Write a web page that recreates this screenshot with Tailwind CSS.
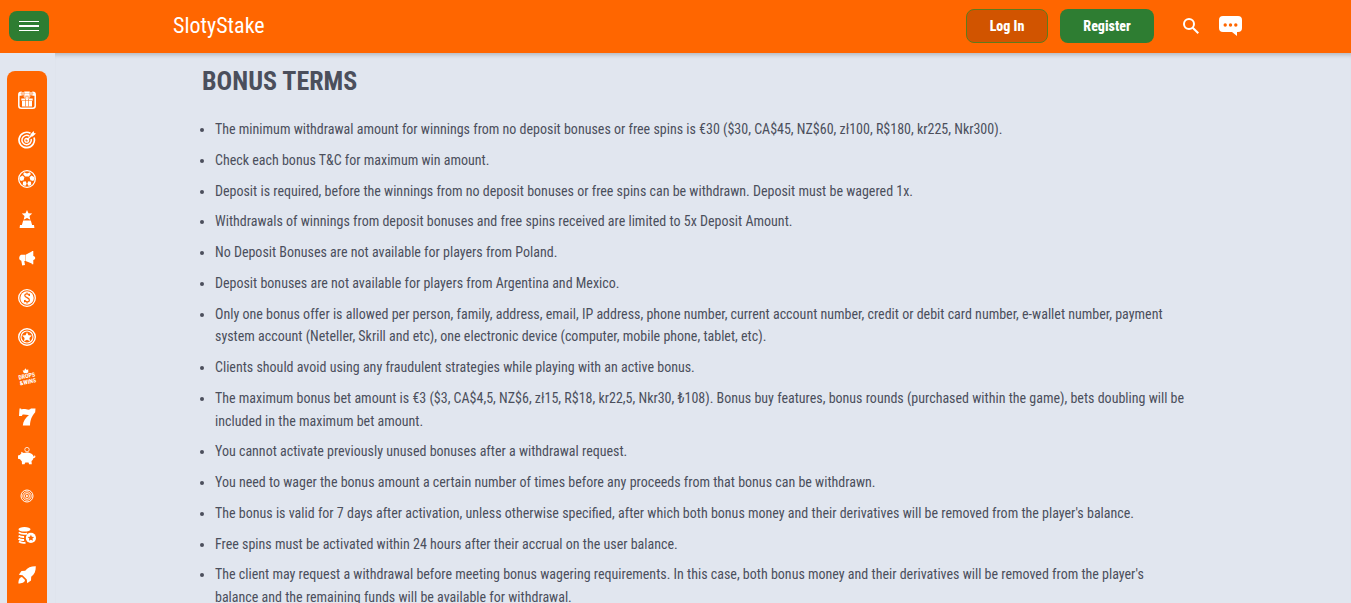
<!DOCTYPE html>
<html lang="en">
<head>
  <meta charset="UTF-8" />
  <meta name="viewport" content="width=device-width, initial-scale=1.0" />
  <title>SlotyStake - Bonus Terms</title>
  <script src="https://cdn.jsdelivr.net/npm/@tailwindcss/browser@4"></script>
</head>
<body class="h-screen overflow-hidden flex flex-col bg-[#e1e6ef] text-[#4b4f5c] font-['Roboto_Condensed','Liberation_Sans_Narrow','Roboto',sans-serif]">

  <!-- Header -->
  <header class="shrink-0 h-[53px] bg-[#ff6600] flex items-center pl-[9px] pr-[108px] pb-0.5">
    <button type="button" aria-label="Open menu" class="w-10 h-[30px] rounded-lg bg-[#2e7d32] flex flex-col items-center justify-center gap-[3px]">
      <span class="w-5 h-px bg-white"></span>
      <span class="w-5 h-0.5 bg-white"></span>
      <span class="w-5 h-px bg-white"></span>
    </button>
    <a href="#" class="ml-[124px] text-[22px] leading-8 text-white">SlotyStake</a>
    <div class="ml-auto flex items-center">
      <button type="button" class="w-[82px] h-[34px] rounded-lg border border-[#5f7a1c] bg-[#d15400] text-white text-sm font-extrabold">Log In</button>
      <button type="button" class="ml-3 w-[94px] h-[34px] rounded-lg bg-[#2e7d32] text-white text-sm font-extrabold">Register</button>
      <button type="button" aria-label="Search" class="ml-7 text-white">
        <svg class="w-[18px] h-[18px]" viewBox="0 0 18 18" fill="none" stroke="currentColor" stroke-width="2"><circle cx="7" cy="7" r="5"/><path d="M10.7 10.700l5.600 5.600"/></svg>
      </button>
      <button type="button" aria-label="Chat" class="ml-[19px] text-white">
        <svg class="w-6 h-5" viewBox="0 0 24 20" fill="currentColor"><path fill-rule="evenodd" d="M4 0h15a4 4 0 0 1 4 4v8a4 4 0 0 1-4 4h-1v4l-5-4H4a4 4 0 0 1-4-4V4a4 4 0 0 1 4-4zM6.200 7.300a1.700 1.700 0 1 0 0 3.400 1.700 1.700 0 0 0 0-3.400zm5.300 0a1.700 1.700 0 1 0 0 3.400 1.700 1.700 0 0 0 0-3.400zm5.300 0a1.700 1.700 0 1 0 0 3.400 1.700 1.700 0 0 0 0-3.400z"/></svg>
      </button>
    </div>
  </header>

  <div class="flex-1 min-h-0 flex">
    <!-- Sidebar -->
    <aside class="shrink-0 w-[55px] pl-[7px] pt-[18px] flex">
      <nav class="w-10 rounded-t-lg bg-[#ff6600] text-white pt-5 pb-[19px] flex flex-col items-center justify-between">
        <a href="#" aria-label="Promotions"><svg class="w-[18px] h-[18px]" viewBox="0 0 18 18" fill="none" stroke="currentColor"><rect x=".8" y="1.300" width="16.400" height="15.900" rx="2.500" stroke-width="1.500"/><path d="M1 3.500h16" stroke-width="2.500"/><path d="M5 0v5M13 0v5" stroke="#ff6600" stroke-width="2.600"/><path d="M5 1v3.500M13 1v3.500" stroke-width="1.200"/><rect x="4" y="10" width="10" height="5.500" fill="currentColor" stroke="none"/><rect x="3.300" y="7.500" width="11.400" height="2" fill="currentColor" stroke="none"/><path d="M7.500 7.500v8M10.500 7.500v8" stroke="#ff6600" stroke-width=".6"/><path d="M9 7.300C6 7 5.500 4.800 7 4.800S9 7.300 9 7.300s.5-2.500 2-2.500S12 7 9 7.300z"/></svg></a>
        <a href="#" aria-label="Challenges"><svg class="w-[18px] h-[18px]" viewBox="0 0 18 18" fill="none" stroke="currentColor"><path d="M12.500 2.300A7.700 7.700 0 1 0 16 6.500" stroke-width="1.700"/><path d="M11.300 5.200A4.700 4.700 0 1 0 13.200 8" stroke-width="1.500"/><circle cx="8.700" cy="9.300" r="1.900" stroke-width="1.300"/><path d="M8.700 9.300l5.800-5.800" stroke-width="1.400"/><path d="M12.600 3.300L15.600 0l.5 1.900 1.900.5-3.300 3.100-2.100-.2z" fill="currentColor" stroke="none"/></svg></a>
        <a href="#" aria-label="Sport"><svg class="w-[18px] h-[18px]" viewBox="0 0 18 18" fill="none" stroke="currentColor"><circle cx="9" cy="9" r="8.300" stroke-width="1.300"/><g fill="currentColor" stroke="none"><path d="M6 2.200l3 1.400 3-1.400.8 2-2 2.200H7.200l-2-2.200zM2 7l2.500-1.500 1.900 1.800-.8 3-2.800.7L1.500 9zM16 7l-2.500-1.500-1.900 1.800.8 3 2.800.7 1.300-2zM5 11.800l2.700-.6 1 2.500-1.400 2.400-2.500-1.200zM13 11.800l-2.700-.6-1 2.500 1.400 2.400 2.500-1.200z"/></g></svg></a>
        <a href="#" aria-label="Tournaments"><svg class="w-[18px] h-[18px]" viewBox="0 0 18 18" fill="currentColor"><path d="M9 0l1.500 3.200 3.700.4-2.700 2.500.8 3.700L9 8 5.700 9.800l.8-3.700-2.700-2.500 3.700-.4zM5.200 10.600h7.600l1.300 4.400H3.900zM2 15h14l.4 3H1.600z"/></svg></a>
        <a href="#" aria-label="News"><svg class="w-[18px] h-[18px]" viewBox="0 0 18 18" fill="currentColor"><path d="M13.800 2h1.500v4.900c1.200.2 1.900 1 1.900 2s-.7 1.800-1.900 2v4.300h-1.500zM7.600 5.800l6.200-3.300v12L7.600 12zM3.800 5.800h3.400v6.200h-.9l.7 4-2.800.4-.9-4.600C1.900 11.300 1.200 10.300 1.200 9s1-3.200 2.600-3.200z"/></svg></a>
        <a href="#" aria-label="Cashback"><svg class="w-[18px] h-[18px]" viewBox="0 0 18 18" fill="none" stroke="currentColor"><circle cx="9" cy="9" r="8.300" stroke-width="1.300"/><circle cx="9" cy="9" r="6.700" fill="currentColor" stroke="none"/><path d="M11.400 7V4.700M11.200 6.500C10.700 5.100 9.700 4.800 8.800 4.800c-1.200 0-2 .6-2 1.600C6.800 8.800 11.400 8.500 11.400 11c0 1.200-.9 1.900-2.300 1.900-1.200 0-2-.6-2.400-1.900M6.600 13.200V11M9 3.500v1.300M9 13v1.400" stroke="#ff6600" stroke-width="1.200"/></svg></a>
        <a href="#" aria-label="Loyalty"><svg class="w-[18px] h-[18px]" viewBox="0 0 18 18" fill="none" stroke="currentColor"><circle cx="9" cy="9" r="8.300" stroke-width="1.400"/><circle cx="9" cy="9" r="6" stroke-width="1.100"/><path d="M9 4.200l1.500 3 3.300.4-2.400 2.300.6 3.400-3-1.600-3 1.600.6-3.400-2.400-2.300 3.300-.4z" fill="currentColor" stroke="none"/></svg></a>
        <a href="#" aria-label="Drops and Wins" class="w-[18px] h-[18px] flex flex-col items-center -rotate-12 font-bold text-[6px] leading-[6px]">
          <svg class="w-1.5 h-[5px] shrink-0" viewBox="0 0 6 5" fill="currentColor"><path d="M0 1.200l1.600 1.200L3 0l1.400 2.400L6 1.200 5.200 5H.8z"/></svg>
          <span class="whitespace-nowrap text-center">DROPS<br />&amp;WINS</span>
        </a>
        <a href="#" aria-label="Slots"><svg class="w-[18px] h-[18px]" viewBox="0 0 18 18" fill="currentColor"><path d="M1.500.5H3l.7.9c3-1.300 5.300.8 8 .1L13 .5h4.500l-.3 3.700c-3.500 4-5 7.600-5.200 13.300H4.800c.3-4.500 2.700-7.700 6.200-10.600-2.300.4-4.200-1-6.300-.3L3.800 8H1z"/></svg></a>
        <a href="#" aria-label="Deposits"><svg class="w-[18px] h-[18px]" viewBox="0 0 18 18" fill="currentColor"><circle cx="9" cy="2.600" r="2.200" fill="none" stroke="currentColor" stroke-width=".8"/><path d="M3.200 4.800l2.500 1.300C8 5 12 5.200 14.200 7.300c.8.700 1.100 1.400 1.300 2.200.8 0 1-.5.800-1.300 1.500.4 1.700 2.500-.8 2.900-.3 1.400-1 2.300-2 3l.3 3.200h-2.700l-.6-1.900H7.300l-.8 1.900H4l-.2-3.100c-.8-.5-1.300-1.100-1.700-1.900L0 11.700V8.500l1.800-.4c.4-.7.9-1.200 1.500-1.600z"/></svg></a>
        <a href="#" aria-label="Live games"><svg class="w-[18px] h-[18px]" viewBox="0 0 18 18" fill="none" stroke="currentColor"><circle cx="9" cy="9" r="6" stroke-width="1"/><circle cx="9" cy="9" r="4.200" stroke-width=".9"/><circle cx="9" cy="9" r="2.600" stroke-width=".8"/><path d="M8.100 7.400l2.700 1.600-2.700 1.600z" fill="currentColor" stroke="none"/></svg></a>
        <a href="#" aria-label="Coins"><svg class="w-[18px] h-[18px]" viewBox="0 0 18 18" fill="none" stroke="currentColor"><ellipse cx="6.500" cy="3.300" rx="6" ry="2.300" fill="currentColor" stroke="none"/><path d="M.8 6.400c1.500 1.300 4.500 1.800 8.400 1.200M.6 9.600c1.200 1.100 3 1.500 5.500 1.400M.6 12.700c1.200 1.100 3 1.500 5.500 1.300M1 15.600c1.500 1.200 4 1.500 6.500 1.100" stroke-width="1.900"/><circle cx="12.900" cy="11.900" r="5.100" fill="currentColor" stroke="none"/><path d="M12.900 8.700l1 2 2.200.4-1.600 1.500.4 2.200-2-1-2 1 .4-2.200-1.600-1.500 2.200-.4z" fill="#ff6600" stroke="none"/></svg></a>
        <a href="#" aria-label="Crash games"><svg class="w-[18px] h-[18px]" viewBox="0 0 18 18" fill="currentColor"><path d="M17.800.2c.1 4.800-1.300 8-4.600 10.600l-.2 3.700-3.800 2.700-.4-3.700-4.300-4.300-3.700-.4L3.500 5l3.700-.2C9.800 1.500 13 .1 17.800.2zM4 11l3 3c-.4 2.700-3.200 3.400-6.600 3.500C.5 14.200 1.300 11.400 4 11z"/></svg></a>
      </nav>
    </aside>

    <!-- Terms -->
    <main class="flex-1 overflow-hidden shadow-[inset_0_5px_4px_-3px_rgba(0,0,0,0.2)] pl-[147px] pr-[164px] pt-3">
      <h1 class="text-[26px] leading-8 font-bold uppercase">Bonus Terms</h1>
      <ul class="mt-[21px] ml-[13px] list-disc text-sm leading-relaxed space-y-2">
        <li>The minimum withdrawal amount for winnings from no deposit bonuses or free spins is €30 ($30, CA$45, NZ$60, zł100, R$180, kr225, Nkr300).</li>
        <li>Check each bonus T&amp;C for maximum win amount.</li>
        <li>Deposit is required, before the winnings from no deposit bonuses or free spins can be withdrawn. Deposit must be wagered 1x.</li>
        <li>Withdrawals of winnings from deposit bonuses and free spins received are limited to 5x Deposit Amount.</li>
        <li>No Deposit Bonuses are not available for players from Poland.</li>
        <li>Deposit bonuses are not available for players from Argentina and Mexico.</li>
        <li>Only one bonus offer is allowed per person, family, address, email, IP address, phone number, current account number, credit or debit card number, e-wallet number, payment system account (Neteller, Skrill and etc), one electronic device (computer, mobile phone, tablet, etc).</li>
        <li>Clients should avoid using any fraudulent strategies while playing with an active bonus.</li>
        <li>The maximum bonus bet amount is €3 ($3, CA$4,5, NZ$6, zł15, R$18, kr22,5, Nkr30, ₺108). Bonus buy features, bonus rounds (purchased within the game), bets doubling will be included in the maximum bet amount.</li>
        <li>You cannot activate previously unused bonuses after a withdrawal request.</li>
        <li>You need to wager the bonus amount a certain number of times before any proceeds from that bonus can be withdrawn.</li>
        <li>The bonus is valid for 7 days after activation, unless otherwise specified, after which both bonus money and their derivatives will be removed from the player's balance.</li>
        <li>Free spins must be activated within 24 hours after their accrual on the user balance.</li>
        <li>The client may request a withdrawal before meeting bonus wagering requirements. In this case, both bonus money and their derivatives will be removed from the player's balance and the remaining funds will be available for withdrawal.</li>
      </ul>
    </main>
  </div>
</body>
</html>
